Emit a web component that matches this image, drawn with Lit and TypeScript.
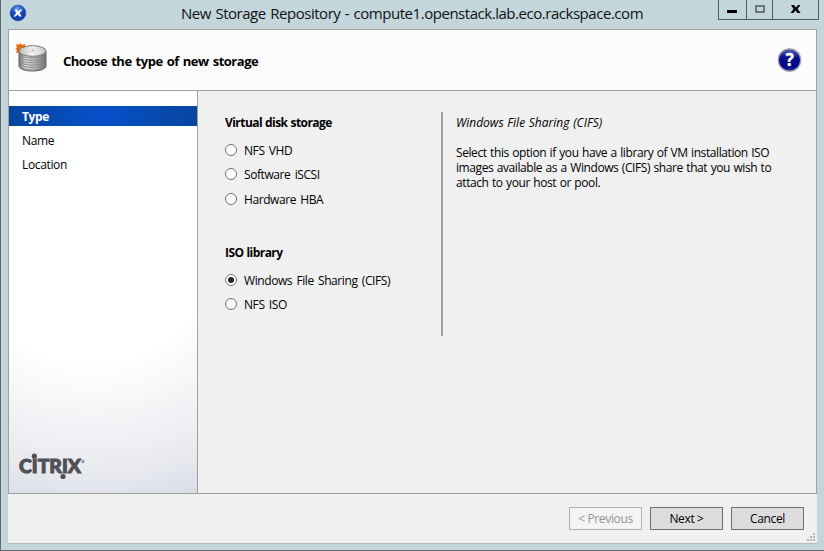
import { LitElement, html, css, svg } from "lit";
import { customElement, property, state } from "lit/decorators.js";
import { classMap } from "lit/directives/class-map.js";

@customElement("wizard-option")
class WizardOption extends LitElement {
  @property() label = "";
  @property({ type: Boolean }) checked = false;
  static styles = css`
    :host { display: flex; align-items: center; height: 24px; gap: 7px; cursor: default; }
    .ring { box-sizing: border-box; width: 12px; height: 12px; border: 1px solid #707070; border-radius: 50%; background: #fff; display: grid; place-items: center; }
    .dot { width: 6px; height: 6px; border-radius: 50%; background: #222; }
    .label { white-space: nowrap; line-height: 16px; padding-top: 1px; letter-spacing: -0.42px; word-spacing: 1.6px; }
  `;
  render() {
    return html`<span class="ring">${this.checked ? html`<span class="dot"></span>` : ""}</span><span class="label">${this.label}</span>`;
  }
}

@customElement("app-root")
class AppRoot extends LitElement {
  @state() selected = "Windows File Sharing (CIFS)";
  steps = ["Type", "Name", "Location"];
  disks = ["NFS VHD", "Software iSCSI", "Hardware HBA"];
  isos = ["Windows File Sharing (CIFS)", "NFS ISO"];

  static styles = css`
    :host { display: block; width: 824px; height: 551px; overflow: hidden; font: 12px "Open Sans", "Noto Sans", sans-serif; letter-spacing: -0.35px; word-spacing: 0.5px; color: #000; }
    * { box-sizing: border-box; }
    .window { height: 551px; background: #c3d6dc; border: solid #626871; border-width: 0 0 1px 1px; display: flex; flex-direction: column; position: relative; }
    .titlebar { height: 29px; flex: none; display: flex; padding-left: 9px; }
    .app-icon { margin-top: 5px; width: 16px; height: 16px; }
    .title { margin: 3px 0 0 155px; font-size: 15px; line-height: 20px; letter-spacing: -0.465px; word-spacing: 1px; white-space: nowrap; width: 537px; flex: none; color: #111; }
    .controls { display: flex; height: 20px; width: 101px; border: 1px solid #535b66; border-top: 0; flex: none; }
    .control { border-right: 1px solid #535b66; display: block; height: 19px; }
    .min { width: 28px; } .max { width: 26px; } .close { width: 45px; border: 0; }
    .client { margin: 0 7px 0 7px; height: 515px; width: 809px; background: #f0f0f0; border-bottom: 1px solid #aebbc4; }
    .pane { height: 465px; border: 1px solid #a0a0a0; display: flex; flex-direction: column; }
    .header { height: 61px; background: #fcfcfc; border-bottom: 1px solid #a0a0a0; display: flex; align-items: center; padding: 0 13px 0 8px; }
    .heading { font-size: 13px; font-weight: 700; letter-spacing: -0.48px; word-spacing: 1.1px; margin-left: 14px; flex: 1; padding-top: 1px; white-space: nowrap; }
    .body { flex: 1; display: flex; }
    .sidebar { width: 189px; border-right: 1px solid #a0a0a0; padding-top: 15px; background: linear-gradient(#fff, #fff) 0 0 / 100% 150px no-repeat, radial-gradient(circle at 84px 150px, #fff 122px, #f5f6f8 170px, #e7e9ed 235px, #d7dce7 275px); display: flex; flex-direction: column; }
    .step { height: 24px; padding-left: 13px; line-height: 22px; }
    .step.current { height: 20px; line-height: 22px; margin-bottom: 4px; color: #fff; font-weight: 700; background: linear-gradient(90deg, #07459f, #0850ca 50%, #07459f); }
    .brand { margin: auto 0 12px 10px; width: 68px; height: 28px; }
    .options { width: 243px; padding: 24px 0 0 27px; }
    .options wizard-option:nth-of-type(3) { margin-top: 1px; }
    .group { font-weight: 700; line-height: 16px; margin-bottom: 7px; letter-spacing: -0.56px; }
    .group.second { margin-top: 34px; }
    .rule { width: 2px; height: 224px; margin-top: 21px; background: #a0a0a0; }
    .description { padding: 24px 0 0 13px; line-height: 15px; white-space: nowrap; letter-spacing: -0.41px; word-spacing: 0.7px; }
    .description em { display: block; line-height: 16px; margin-bottom: 14px; letter-spacing: 0; word-spacing: 0.6px; }
    .footer { height: 49px; display: flex; justify-content: flex-end; gap: 8px; padding: 13px 13px 0 0; }
    .button { width: 73px; height: 23px; border: 1px solid #707070; background: #ddd; font: inherit; letter-spacing: inherit; padding: 0; color: #000; }
    .button.off { color: #939393; border-color: #adb2b5; background: #f4f4f4; }
    .grip { position: absolute; left: 806px; top: 533px; width: 9px; height: 9px; }
    svg { display: block; flex: none; overflow: visible; }
  `;

  option(label: string) {
    return html`<wizard-option .label=${label} ?checked=${this.selected === label} @click=${() => (this.selected = label)}></wizard-option>`;
  }

  render() {
    return html`<div class="window">
      <div class="titlebar">
        <svg class="app-icon" viewBox="0 0 16 16">
          <defs><radialGradient id="ball" cx=".45" cy=".25"><stop offset="0" stop-color="#77a6ef"/><stop offset=".6" stop-color="#2457cb"/><stop offset="1" stop-color="#153eaa"/></radialGradient></defs>
          <circle cx="8" cy="8" r="7.9" fill="url(#ball)" stroke="#2854a5" stroke-width=".6"/>
          <path d="M4.500 4.500H7l1.300 2L10.300 4.500h2.200L9.500 8l2.300 3.400H9.200L7.700 9.500 5.700 11.400H3.400l3-3.500z" fill="#fff"/>
        </svg>
        <div class="title">New Storage Repository - compute1.openstack.lab.eco.rackspace.com</div>
        <div class="controls">
          <svg class="control min" viewBox="0 0 27 19"><path d="M8 10h10v3H8z"/></svg>
          <svg class="control max" viewBox="0 0 25 19"><path d="M9 6h8v6H9z" fill="none" stroke="#6b7679" stroke-width="2"/></svg>
          <svg class="control close" viewBox="0 0 45 19"><path d="M18 5h3l2 2.500L25 5h2.500l-2.900 4 3 4H24.500L22.500 10.500 20.500 13h-3l3-4z"/></svg>
        </div>
      </div>
      <div class="client">
        <div class="pane">
          <div class="header">
            <svg width="32" height="32" viewBox="0 0 32 32">
              <defs>
                <linearGradient id="side"><stop stop-color="#777"/><stop offset=".25" stop-color="#ddd"/><stop offset=".6" stop-color="#bbb"/><stop offset="1" stop-color="#737373"/></linearGradient>
                <linearGradient id="lid"><stop stop-color="#b8b8b8"/><stop offset=".5" stop-color="#f5f5f5"/><stop offset="1" stop-color="#c4c4c4"/></linearGradient>
              </defs>
              <path d="M-1 0l3 1 1-2 2 2 3-1 0 3-2 4-3 1-4 1 1-3-2-1 2-1z" fill="#f26409"/>
              <path d="M2 4l2-1 1 2-2 2z" fill="#a8b900"/>
              <path d="M2 7v15.500C4 28.600 27 28.600 29 22.500V7z" fill="url(#side)" stroke="#666"/>
              ${[0, 1, 2, 3, 4, 5].map((n) => svg`<path transform="translate(0 ${n * 2.4})" d="M2.500 10c3 5.300 23 5.300 26 0" fill="none" stroke="#777" stroke-width=".8"/>`)}
              <ellipse cx="15.500" cy="7" rx="13.500" ry="5.300" fill="url(#lid)" stroke="#777"/>
              <ellipse cx="15.500" cy="6.500" rx="3.600" ry="1.400" fill="#fff" stroke="#bbb" stroke-width=".6"/>
              <ellipse cx="15.500" cy="6.500" rx="1.200" ry=".6" fill="#888"/>
            </svg>
            <div class="heading">Choose the type of new storage</div>
            <svg width="26" height="26" viewBox="0 0 26 26">
              <defs><linearGradient id="help" x2="0" y2="1"><stop stop-color="#5a64b4"/><stop offset=".4" stop-color="#0a1089"/><stop offset=".8" stop-color="#000088"/><stop offset="1" stop-color="#3038a4"/></linearGradient></defs>
              <circle cx="12.500" cy="13" r="11.200" fill="url(#help)" stroke="#a4a4ac" stroke-width="1.300"/>
              <text x="12.700" y="19.200" text-anchor="middle" font-family="Open Sans" font-size="17" font-weight="700" fill="#fff" stroke="#fff" stroke-width=".4">?</text>
            </svg>
          </div>
          <div class="body">
            <div class="sidebar">
              ${this.steps.map((s, i) => html`<div class=${classMap({ step: true, current: i === 0 })}>${s}</div>`)}
              <svg class="brand" viewBox="0 0 68 28" fill="#505156">
                <text x="0" y="20.300" font-family="Lato" font-size="19" font-weight="900" letter-spacing="0" textLength="62" lengthAdjust="spacingAndGlyphs" stroke="#505156" stroke-width="1">CITRIX</text>
                <circle cx="15.300" cy="3.200" r="2.600"/><circle cx="44" cy="23.500" r="2.600"/><circle cx="63.800" cy="8.500" r="1.100" fill="none" stroke="#666" stroke-width="1"/>
              </svg>
            </div>
            <div class="options">
              <div class="group">Virtual disk storage</div>
              ${this.disks.map((d) => this.option(d))}
              <div class="group second">ISO library</div>
              ${this.isos.map((d) => this.option(d))}
            </div>
            <div class="rule"></div>
            <div class="description">
              <em>Windows File Sharing (CIFS)</em>
              Select this option if you have a library of VM installation ISO<br>images available as a Windows (CIFS) share that you wish to<br>attach to your host or pool.
            </div>
          </div>
        </div>
        <div class="footer">
          <button class="button off" disabled>&lt; Previous</button>
          <button class="button">Next &gt;</button>
          <button class="button">Cancel</button>
        </div>
      </div>
      <svg class="grip" viewBox="0 0 9 9" fill="#b5b5b5"><path d="M6 0h2v2H6zM3 3h2v2H3zM6 3h2v2H6zM0 6h2v2H0zM3 6h2v2H3zM6 6h2v2H6z"/></svg>
    </div>`;
  }
}
